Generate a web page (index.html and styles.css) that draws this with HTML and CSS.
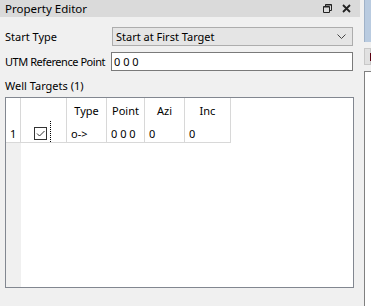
FILE: index.html
```html
<!DOCTYPE html>
<html lang="en">
<head>
    <meta charset="UTF-8">
    <title>Property Editor</title>
    <link rel="stylesheet" href="styles.css">
</head>
<body>
    <div class="panel">
        <div class="titlebar">
            <span class="title">Property Editor</span>
            <div class="title-buttons">
                <svg class="icon" width="9" height="9" viewBox="0 0 9 9">
                    <path d="M2.5 0.5h6v6h-2M0.5 2.5h6v6h-6z M2.5 2.5v-2" fill="none" stroke="#222" stroke-width="1"/>
                    <path d="M2.5 1h6 M0.5 3h6" stroke="#222" stroke-width="1"/>
                </svg>
                <svg class="icon" width="9" height="9" viewBox="0 0 9 9">
                    <path d="M1 1L8 8M8 1L1 8" stroke="#222" stroke-width="1.8"/>
                </svg>
            </div>
        </div>

        <div class="form">
            <div class="row">
                <label class="label">Start Type</label>
                <div class="combo">
                    <span>Start at First Target</span>
                    <svg width="9" height="5" viewBox="0 0 9 5">
                        <path d="M0.5 0.5L4.5 4.5L8.5 0.5" fill="none" stroke="#444" stroke-width="1"/>
                    </svg>
                </div>
            </div>
            <div class="row">
                <label class="label label-tight">UTM Reference Point</label>
                <div class="textbox">0 0 0</div>
            </div>
            <div class="section-label">Well Targets (1)</div>

            <div class="grid">
                <div class="grid-rows">
                    <div class="gcell corner"></div>
                    <div class="gcell"></div>
                    <div class="gcell head">Type</div>
                    <div class="gcell head">Point</div>
                    <div class="gcell head">Azi</div>
                    <div class="gcell head">Inc</div>

                    <div class="gcell rowhead">1</div>
                    <div class="gcell check-cell">
                        <span class="checkbox">
                            <svg width="11" height="11" viewBox="0 0 11 11">
                                <path d="M2 5.5L4.5 8L9.5 3" fill="none" stroke="#333" stroke-width="1"/>
                            </svg>
                        </span>
                        <span class="focus-line"></span>
                    </div>
                    <div class="gcell data">o-&gt;</div>
                    <div class="gcell data">0 0 0</div>
                    <div class="gcell data">0</div>
                    <div class="gcell data">0</div>
                </div>
                <div class="grid-empty">
                    <div class="empty-head"></div>
                    <div class="empty-body"></div>
                </div>
            </div>
        </div>
    </div>

    <div class="side">
        <div class="side-tab"></div>
        <div class="side-button"><span class="side-mark"></span></div>
        <div class="side-box"></div>
    </div>
</body>
</html>
```

FILE: styles.css
```css
body, html {
    margin: 0;
    padding: 0;
    height: 100%;
    width: 100%;
    overflow: hidden;
    background-color: #f0f0f0;
    color: #000;
    font-family: 'Noto Sans', sans-serif;
    font-size: 11px;
}

body {
    display: flex;
}

.panel {
    width: 360px;
    flex-shrink: 0;
    display: flex;
    flex-direction: column;
}

.titlebar {
    height: 17px;
    background-color: #dadada;
    display: flex;
    align-items: center;
    justify-content: space-between;
    padding: 0 9px 0 5px;
}

.title {
    font-size: 11.5px;
    line-height: 17px;
}

.title-buttons {
    display: flex;
    gap: 10px;
    align-items: center;
}

.icon {
    display: block;
}

.form {
    padding: 10px 6px 0 5px;
}

.row {
    display: flex;
    align-items: center;
    margin-bottom: 6px;
}

.label {
    width: 107px;
    flex-shrink: 0;
    white-space: nowrap;
    line-height: 19px;
}

.label-tight {
    letter-spacing: -0.45px;
}

.combo {
    width: 230px;
    height: 17px;
    border: 1px solid #adadad;
    background-color: #e5e5e5;
    display: flex;
    align-items: center;
    justify-content: space-between;
    padding: 0 6px 0 3px;
}

.textbox {
    margin-left: -1px;
    width: 238px;
    height: 17px;
    line-height: 17px;
    border: 1px solid #7a7a7a;
    background-color: #fff;
    padding-left: 2px;
}

.section-label {
    line-height: 17px;
    margin-top: 6px;
}

.grid {
    margin-top: 3px;
    height: 189px;
    border: 1px solid #828790;
    background-color: #fff;
    display: flex;
    flex-direction: column;
}

.grid-rows {
    display: grid;
    grid-template-columns: 15px 46px 40px 38px 40px 46px;
    grid-template-rows: 23px 22px;
}

.gcell {
    border-right: 1px solid #d8d8d8;
    border-bottom: 1px solid #d8d8d8;
    box-sizing: border-box;
    display: flex;
    align-items: center;
}

.grid-rows > .gcell:nth-child(-n+6) {
    border-bottom: none;
}

.head {
    justify-content: center;
    padding-top: 1px;
}

.rowhead {
    padding-left: 4px;
    padding-top: 3px;
}

.data {
    padding-left: 4px;
    padding-top: 3px;
}

.check-cell {
    position: relative;
    padding-left: 13px;
    padding-top: 4px;
}

.checkbox {
    width: 11px;
    height: 11px;
    border: 1px solid #333;
    display: block;
}

.checkbox svg {
    display: block;
}

.focus-line {
    position: absolute;
    left: 29px;
    top: 0;
    bottom: 0;
    border-left: 1px dotted #000;
}

.grid-empty {
    flex: 1;
    display: flex;
}

.grid-empty .empty-head {
    width: 15px;
    background-color: #f0f0f0;
}

.side {
    margin-left: 4px;
    flex: 1;
    display: flex;
    flex-direction: column;
}

.side-tab {
    height: 42px;
    background-color: #b9cbe0;
    border-left: 1px solid #a0b2c8;
}

.side-button {
    margin-top: 6px;
    height: 15px;
    background-color: #e1e1e1;
    border: 1px solid #c8c8c8;
    position: relative;
}

.side-mark {
    position: absolute;
    left: 5px;
    top: 4px;
    width: 3px;
    height: 8px;
    background-color: #5a0010;
}

.side-box {
    margin-top: 6px;
    flex: 1;
    border-left: 1px solid #808080;
    border-top: 1px solid #808080;
    background-color: #fff;
}
```
